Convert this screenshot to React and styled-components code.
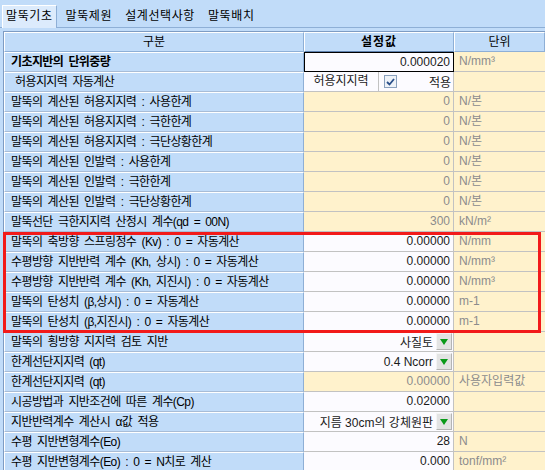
import React from 'react';
import styled, { createGlobalStyle, css } from 'styled-components';

const GlobalStyle = createGlobalStyle`
  html, body {
    margin: 0;
    padding: 0;
    background: #c1dcf9;
    font-family: "Liberation Sans", "Noto Sans CJK KR", sans-serif;
    font-size: 12px;
    overflow: hidden;
  }
`;

const Page = styled.div`
  width: 545px;
  height: 470px;
  overflow: hidden;
`;

const TabBar = styled.div`
  display: flex;
  align-items: flex-end;
  height: 27px;
  padding-left: 2px;
  border-bottom: 1px solid #8eafd6;
`;

const Tab = styled.div`
  height: 21px;
  line-height: 21px;
  padding: 0 4px;
  margin-right: 5px;
  color: #000;
  letter-spacing: 0.6px;
  ${(p) =>
    p.$active &&
    css`
      height: 22px;
      background: #dcebfc;
      border: 1px solid #ffffff;
      border-bottom: none;
      border-right-color: #8eafd6;
      margin-bottom: -1px;
      padding: 0 3px;
    `}
`;

const Grid = styled.div`
  margin: 3px 0 0 3px;
  border-left: 1px solid #7e9cc3;
  border-top: 1px solid #7e9cc3;
`;

const Row = styled.div`
  display: grid;
  grid-template-columns: 300px 150px 1fr;
  height: 20px;
`;

const HeadCell = styled.div`
  box-sizing: border-box;
  height: 20px;
  line-height: 18px;
  text-align: center;
  background: #c1dcf9;
  border-top: 1px solid #ffffff;
  border-left: 1px solid #ffffff;
  border-bottom: 1px solid #8eafd6;
  border-right: 1px solid #8eafd6;
  font-weight: ${(p) => (p.$bold ? 700 : 400)};
  ${(p) =>
    p.$bold &&
    css`
      border-bottom-color: #5f82b0;
      letter-spacing: 1px;
    `}
`;

const Label = styled.div`
  box-sizing: border-box;
  height: 20px;
  line-height: 18px;
  padding-left: ${(p) => (p.$indent ? 10 : 6)}px;
  background: #c1dcf9;
  border-top: 1px solid #ffffff;
  border-left: 1px solid #ffffff;
  border-bottom: 1px solid #a8bcd6;
  border-right: 1px solid #8eafd6;
  white-space: nowrap;
  overflow: hidden;
  letter-spacing: -0.6px;
  word-spacing: 2.5px;
  font-weight: ${(p) => (p.$bold ? 700 : 400)};
  color: #000;
`;

const Value = styled.div`
  box-sizing: border-box;
  height: 20px;
  line-height: 19px;
  text-align: right;
  padding-right: 3px;
  background: ${(p) => (p.$edit ? '#fcfbff' : '#fff2cc')};
  color: ${(p) => (p.$edit ? '#1a1a1a' : '#8c8c8c')};
  border-right: 1px solid #c2c2c2;
  border-bottom: 1px solid #c2c2c2;
  white-space: nowrap;
  ${(p) =>
    p.$focus &&
    css`
      border: 1px solid #000;
      line-height: 18px;
    `}
`;

const Unit = styled.div`
  box-sizing: border-box;
  height: 20px;
  line-height: 19px;
  padding-left: 5px;
  background: #fff2cc;
  color: #8c8c8c;
  border-bottom: 1px solid #c2c2c2;
  white-space: nowrap;
`;

const SelectCell = styled.div`
  box-sizing: border-box;
  display: flex;
  align-items: center;
  justify-content: flex-end;
  height: 20px;
  padding-right: 1px;
  gap: 3px;
  background: #fcfbff;
  color: #1a1a1a;
  border-right: 1px solid #c2c2c2;
  border-bottom: 1px solid #c2c2c2;
  white-space: nowrap;
`;

const DropButton = styled.div`
  box-sizing: border-box;
  width: 16px;
  height: 17px;
  display: flex;
  align-items: center;
  justify-content: center;
  background: #e3e3e3;
  border: 1px solid #b4b4b4;
  border-top-color: #f4f4f4;
  border-left-color: #f4f4f4;
`;

const Triangle = styled.div`
  width: 0;
  height: 0;
  border-left: 4px solid transparent;
  border-right: 4px solid transparent;
  border-top: 6px solid #0a9a1a;
`;

const CheckCell = styled.div`
  box-sizing: border-box;
  display: grid;
  grid-template-columns: 75px 1fr;
  height: 20px;
  background: #fcfbff;
  color: #1a1a1a;
  border-right: 1px solid #c2c2c2;
  border-bottom: 1px solid #c2c2c2;
`;

const CheckLabel = styled.div`
  line-height: 19px;
  text-align: center;
  border-right: 1px solid #c2c2c2;
`;

const CheckApply = styled.div`
  display: flex;
  align-items: center;
  justify-content: space-between;
  padding: 0 2px 0 5px;
`;

const Box = styled.div`
  box-sizing: border-box;
  width: 13px;
  height: 13px;
  border: 1px solid #8aa0bd;
  background: #eef2f8;
  display: flex;
  align-items: center;
  justify-content: center;
`;

const RedGroup = styled.div`
  position: relative;
  &::after {
    content: '';
    position: absolute;
    left: -1px;
    right: 4px;
    top: 0;
    bottom: -1px;
    border: 3px solid #f21a1a;
    pointer-events: none;
  }
`;

const rowsTop = [
  { label: '기초지반의 단위중량', bold: true, value: '0.000020', edit: true, focus: true, unit: 'N/mm³' },
  { label: '허용지지력 자동계산', indent: true, type: 'check' },
  { label: '말뚝의 계산된 허용지지력 : 사용한계', value: '0', unit: 'N/본' },
  { label: '말뚝의 계산된 허용지지력 : 극한한계', value: '0', unit: 'N/본' },
  { label: '말뚝의 계산된 허용지지력 : 극단상황한계', value: '0', unit: 'N/본' },
  { label: '말뚝의 계산된 인발력 : 사용한계', value: '0', unit: 'N/본' },
  { label: '말뚝의 계산된 인발력 : 극한한계', value: '0', unit: 'N/본' },
  { label: '말뚝의 계산된 인발력 : 극단상황한계', value: '0', unit: 'N/본' },
  { label: '말뚝선단 극한지지력 산정시 계수(qd = 00N)', value: '300', unit: 'kN/m²' },
];

const rowsRed = [
  { label: '말뚝의 축방향 스프링정수 (Kv) : 0 = 자동계산', value: '0.00000', edit: true, unit: 'N/mm' },
  { label: '수평방향 지반반력 계수 (Kh, 상시) : 0 = 자동계산', value: '0.00000', edit: true, unit: 'N/mm³' },
  { label: '수평방향 지반반력 계수 (Kh, 지진시) : 0 = 자동계산', value: '0.00000', edit: true, unit: 'N/mm³' },
  { label: '말뚝의 탄성치 (β,상시) : 0 = 자동계산', value: '0.00000', edit: true, unit: 'm-1' },
  { label: '말뚝의 탄성치 (β,지진시) : 0 = 자동계산', value: '0.00000', edit: true, unit: 'm-1' },
];

const rowsBottom = [
  { label: '말뚝의 횡방향 지지력 검토 지반', type: 'select', value: '사질토' },
  { label: '한계선단지지력 (qt)', type: 'select', value: '0.4 Ncorr' },
  { label: '한계선단지지력 (qt)', value: '0.00000', unit: '사용자입력값' },
  { label: '시공방법과 지반조건에 따른 계수(Cp)', value: '0.02000', edit: true },
  { label: '지반반력계수 계산시 α값 적용', type: 'select', value: '지름 30cm의 강체원판' },
  { label: '수평 지반변형계수(Eo)', value: '28', edit: true, unit: 'N' },
  { label: '수평 지반변형계수(Eo) : 0 = N치로 계산', value: '0.000', edit: true, unit: 'tonf/mm²' },
];

function PropRow({ row }) {
  let middle;
  if (row.type === 'check') {
    middle = (
      <CheckCell>
        <CheckLabel>허용지지력</CheckLabel>
        <CheckApply>
          <Box>
            <svg width="9" height="8" viewBox="0 0 9 8">
              <path d="M1 4 L3.5 6.5 L8 1" fill="none" stroke="#2a4f8a" strokeWidth="1.8" />
            </svg>
          </Box>
          <span>적용</span>
        </CheckApply>
      </CheckCell>
    );
  } else if (row.type === 'select') {
    middle = (
      <SelectCell>
        <span>{row.value}</span>
        <DropButton>
          <Triangle />
        </DropButton>
      </SelectCell>
    );
  } else {
    middle = (
      <Value $edit={row.edit} $focus={row.focus}>
        {row.value}
      </Value>
    );
  }

  return (
    <Row>
      <Label $bold={row.bold} $indent={row.indent}>
        {row.label}
      </Label>
      {middle}
      <Unit>{row.unit}</Unit>
    </Row>
  );
}

export default function App() {
  return (
    <Page>
      <GlobalStyle />
      <TabBar>
        <Tab $active>말뚝기초</Tab>
        <Tab>말뚝제원</Tab>
        <Tab>설계선택사항</Tab>
        <Tab>말뚝배치</Tab>
      </TabBar>
      <Grid>
        <Row>
          <HeadCell>구분</HeadCell>
          <HeadCell $bold>설정값</HeadCell>
          <HeadCell>단위</HeadCell>
        </Row>
        {rowsTop.map((row, i) => (
          <PropRow key={'t' + i} row={row} />
        ))}
        <RedGroup>
          {rowsRed.map((row, i) => (
            <PropRow key={'r' + i} row={row} />
          ))}
        </RedGroup>
        {rowsBottom.map((row, i) => (
          <PropRow key={'b' + i} row={row} />
        ))}
      </Grid>
    </Page>
  );
}
